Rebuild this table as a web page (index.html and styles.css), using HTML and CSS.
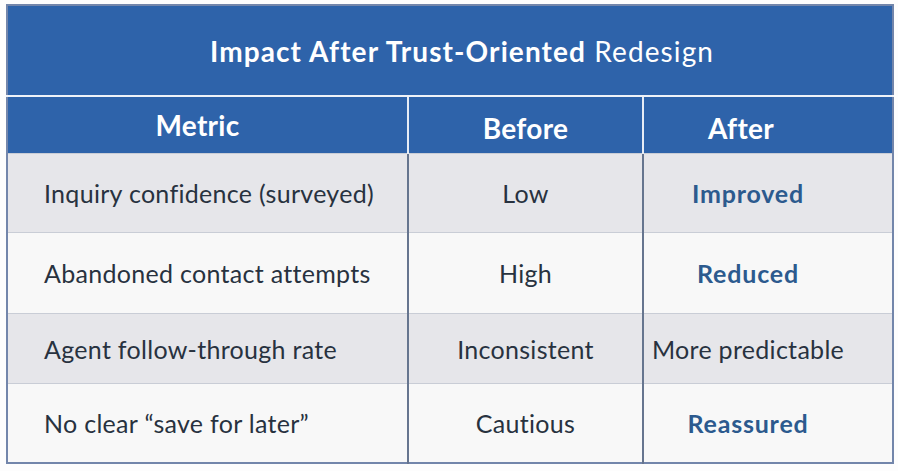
FILE: index.html
```html
<!DOCTYPE html>
<html lang="en">
<head>
<meta charset="utf-8">
<title>Impact After Trust-Oriented Redesign</title>
<link rel="stylesheet" href="styles.css">
</head>
<body>
<div class="wrap">
<table class="impact">
  <colgroup>
    <col class="c-metric">
    <col class="c-before">
    <col class="c-after">
  </colgroup>
  <thead>
    <tr class="title-row">
      <th colspan="3"><strong>Impact After Trust-Oriented</strong> Redesign</th>
    </tr>
    <tr class="head-row">
      <th class="h-metric">Metric</th>
      <th class="h-before">Before</th>
      <th class="h-after">After</th>
    </tr>
  </thead>
  <tbody>
    <tr class="r1 shade">
      <td class="metric">Inquiry confidence (surveyed)</td>
      <td class="before">Low</td>
      <td class="after good">Improved</td>
    </tr>
    <tr class="r2">
      <td class="metric">Abandoned contact attempts</td>
      <td class="before">High</td>
      <td class="after good">Reduced</td>
    </tr>
    <tr class="r3 shade">
      <td class="metric">Agent follow-through rate</td>
      <td class="before">Inconsistent</td>
      <td class="after">More predictable</td>
    </tr>
    <tr class="r4">
      <td class="metric">No clear “save for later”</td>
      <td class="before">Cautious</td>
      <td class="after good">Reassured</td>
    </tr>
  </tbody>
</table>
</div>
</body>
</html>
```

FILE: styles.css
```css
html, body {
  margin: 0;
  padding: 0;
  background: #fdfdfd;
}

.wrap {
  padding: 4px 0 0 6px;
}

.impact {
  width: 886px;
  border-collapse: collapse;
  table-layout: fixed;
  font-family: Lato, "Open Sans", "Liberation Sans", sans-serif;
  color: #28323f;
  border: 2px solid #7386ab;
}

.c-metric { width: 401px; }
.c-before { width: 235px; }
.c-after { width: 250px; }

.title-row th {
  height: 89px;
  padding: 0 0 0 24px;
  background: #2e63aa;
  color: #ffffff;
  font-size: 28px;
  font-weight: 400;
  text-align: center;
  letter-spacing: 1.1px;
}

.title-row strong {
  font-weight: 700;
}

.head-row th {
  background: #2e63aa;
  color: #ffffff;
  font-size: 28px;
  font-weight: 700;
  letter-spacing: 0.3px;
  border-top: 2px solid #eef2f8;
  text-align: center;
}

.head-row th + th {
  border-left: 2px solid #e6ecf5;
}

.head-row .h-metric {
  height: 52px;
  padding: 2px 20px 2px 0;
}

.head-row .h-before {
  height: 50px;
  padding: 6px 0 0 0;
}

.head-row .h-after {
  height: 50px;
  padding: 6px 54px 0 0;
}

.impact tbody td {
  padding: 0;
  font-size: 25px;
  letter-spacing: 0.3px;
  border-top: 1px solid #c9cdd6;
}

.impact tbody td + td {
  border-left: 2px solid #66758f;
}

.impact tbody tr td {
  background: #f8f8f8;
}

.impact tbody tr.shade td {
  background: #e6e6ea;
}

.r1 td { height: 78px; }
.r2 td { height: 80px; }
.r3 td { height: 69px; }
.r4 td { height: 78px; }

.metric {
  padding-left: 36px !important;
  text-align: left;
}

.before {
  text-align: center;
}

.after {
  text-align: center;
  padding-right: 40px !important;
}

.good {
  color: #2c5a8e;
  font-weight: 700;
  letter-spacing: 0.8px !important;
}
```
